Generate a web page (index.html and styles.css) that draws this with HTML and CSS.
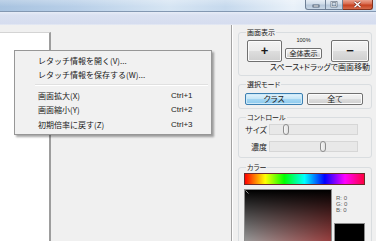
FILE: index.html
```html
<!DOCTYPE html>
<html lang="ja">
  <head>
    <meta charset="UTF-8" />
    <title>レタッチ</title>
    <link rel="stylesheet" href="styles.css">
  </head>
  <body>
    <div class="titlebar">
      <div class="caption">
        <span class="cap cap-min">
          <svg width="8" height="6" viewBox="0 0 8 6"><rect x="1" y="3" width="6" height="2" fill="#fff" stroke="#35465c" stroke-width="0.8"/></svg>
        </span>
        <span class="cap cap-max">
          <svg width="8" height="7" viewBox="0 0 8 7"><rect x="1.5" y="1" width="5" height="4.5" fill="none" stroke="#35465c" stroke-width="1.6"/><rect x="1.5" y="1" width="5" height="4.5" fill="none" stroke="#fff" stroke-width="0.7"/></svg>
        </span>
        <span class="cap cap-close">
          <svg width="9" height="7" viewBox="0 0 9 7"><path d="M1.5 0.8 L7.5 6.2 M7.5 0.8 L1.5 6.2" stroke="#7a2a1c" stroke-width="2.6"/><path d="M1.5 0.8 L7.5 6.2 M7.5 0.8 L1.5 6.2" stroke="#fff" stroke-width="1.4"/></svg>
        </span>
      </div>
    </div>
    <div class="menubar"></div>

    <div class="main">
      <div class="view">
        <div class="canvas"></div>

        <div class="menu">
          <div class="item"><span>レタッチ情報を開く(V)...</span></div>
          <div class="item"><span>レタッチ情報を保存する(W)...</span></div>
          <div class="sep"></div>
          <div class="item"><span>画面拡大(X)</span><span class="key">Ctrl+1</span></div>
          <div class="item"><span>画面縮小(Y)</span><span class="key">Ctrl+2</span></div>
          <div class="item"><span>初期倍率に戻す(Z)</span><span class="key">Ctrl+3</span></div>
        </div>
      </div>

      <div class="panel">
        <fieldset class="group g-view">
          <legend>画面表示</legend>
          <div class="zoom-row">
            <button class="btn big plus">+</button>
            <div class="zoom-mid">
              <div class="pct">100%</div>
              <button class="btn small">全体表示</button>
            </div>
            <button class="btn big minus">&minus;</button>
          </div>
          <div class="hint">スペース+ドラッグで画面移動</div>
        </fieldset>

        <fieldset class="group g-mode">
          <legend>選択モード</legend>
          <div class="mode-row">
            <button class="btn mode on">クラス</button>
            <button class="btn mode">全て</button>
          </div>
        </fieldset>

        <fieldset class="group g-ctrl">
          <legend>コントロール</legend>
          <div class="ctrl-row">
            <span class="ctrl-label">サイズ</span>
            <div class="slider"><span class="thumb" style="left: 13px"></span></div>
          </div>
          <div class="ctrl-row">
            <span class="ctrl-label">濃度</span>
            <div class="slider"><span class="thumb" style="left: 50px"></span></div>
          </div>
        </fieldset>

        <fieldset class="group g-color">
          <legend>カラー</legend>
          <div class="hue"></div>
          <div class="color-row">
            <div class="sv">
              <svg class="cursor" width="4" height="4" viewBox="0 0 4 4"><path d="M0.5 0.5 L3.5 3.5" stroke="#bbb" stroke-width="0.8"/></svg>
            </div>
            <div class="color-side">
              <div class="rgb">R: 0<br>G: 0<br>B: 0</div>
              <div class="swatch"></div>
            </div>
          </div>
        </fieldset>
      </div>
    </div>
  </body>
</html>
```

FILE: styles.css
```css
* {
  box-sizing: border-box;
}

body {
  margin: 0;
  width: 376px;
  height: 241px;
  overflow: hidden;
  background-color: #f0f0f0;
  font-family: "Noto Sans CJK JP", "Noto Sans", sans-serif;
  font-feature-settings: "palt";
  font-size: 8px;
  color: #1a1a1a;
}

/* barra de titulo */
.titlebar {
  height: 12px;
  border-bottom: 1px solid #8398b2;
  background:
    linear-gradient(rgba(255, 255, 255, 0.25), rgba(255, 255, 255, 0) 60%),
    linear-gradient(90deg, #a8c3e0 0%, #b8cfe8 20%, #d6e5f3 45%, #c6d9ed 60%, #e9f1f9 78%, #d4e3f2 88%, #c7dbef 100%);
  display: flex;
  justify-content: flex-end;
  padding-right: 3px;
}

.caption {
  display: flex;
  height: 10px;
}

.cap {
  display: flex;
  align-items: center;
  justify-content: center;
  border: 1px solid #6f8096;
  border-top: none;
  border-left: none;
  background: linear-gradient(#e6edf5, #cfdbe8 45%, #b5c6d9 55%, #c9d7e6);
}

.cap-min {
  width: 21px;
  border-left: 1px solid #6f8096;
  border-radius: 0 0 0 3px;
}

.cap-max {
  width: 17px;
}

.cap-close {
  width: 30px;
  border-color: #83331f;
  border-radius: 0 0 3px 0;
  background: linear-gradient(#eaa38f, #d9694d 45%, #c5401f 55%, #d66a4a);
}

.menubar {
  height: 13px;
  background: linear-gradient(#e7ecf7, #dae1f1 25%, #d6ddef 90%, #e8ecf5);
}

/* area principal */
.main {
  display: flex;
  height: 216px;
  overflow: hidden;
}

.view {
  position: relative;
  width: 232px;
  padding-top: 7px;
  border-right: 1px solid #a3a3a3;
}

.canvas {
  width: 51px;
  height: 100%;
  background-color: #fff;
  border-top: 1px solid #d4d4d4;
  border-right: 2px solid #9d9d9d;
}

/* menu contextual */
.menu {
  position: absolute;
  left: 14px;
  top: 25px;
  width: 198px;
  padding: 2px 0;
  background-color: #f1f1f1;
  border: 1px solid #979797;
  box-shadow: 2px 2px 2px rgba(0, 0, 0, 0.35);
  font-feature-settings: normal;
}

.item {
  display: flex;
  align-items: center;
  height: 14.5px;
  padding-left: 23px;
}

.item span:first-child {
  flex: 1;
}

.key {
  width: 40px;
  font-family: "Liberation Sans", sans-serif;
}

.sep {
  height: 6px;
  margin: 0 3px 0 20px;
  background: linear-gradient(transparent 2px, #e0e0e0 2px, #e0e0e0 3px, #fff 3px, #fff 4px, transparent 4px);
}

/* panel derecho */
.panel {
  flex: 1;
  padding: 3px 4px 0 5px;
  border-left: 1px solid #fff;
}

.group {
  margin: 0 0 4px 0;
  padding: 0 1px 3px 5px;
  border: 1px solid #d9dde0;
  border-radius: 3px;
  min-width: 0;
}

.group legend {
  padding: 0 1px;
  margin-left: 2px;
  font-size: 7px;
  line-height: 9px;
}

.g-view {
  padding-bottom: 4px;
}

.g-ctrl {
  padding-bottom: 5px;
  margin-bottom: 5px;
}

.btn {
  margin: 0;
  padding: 0;
  border: 1px solid #707070;
  border-radius: 2px;
  background: linear-gradient(#f3f3f3, #ebebeb 48%, #dddddd 52%, #cfcfcf);
  box-shadow: inset 0 0 0 1px #fbfbfb;
  font-family: inherit;
  font-feature-settings: "palt";
  color: #1a1a1a;
}

.zoom-row {
  display: flex;
  align-items: flex-start;
  padding-left: 3px;
}

.big {
  height: 22px;
  margin-top: 3px;
  font-family: "Liberation Sans", sans-serif;
  font-size: 13px;
  font-weight: bold;
  line-height: 18px;
}

.plus {
  width: 35px;
}

.minus {
  width: 38px;
  margin-left: 6px;
}

.zoom-mid {
  width: 43px;
  display: flex;
  flex-direction: column;
  align-items: center;
}

.pct {
  font-family: "Liberation Sans", sans-serif;
  font-size: 5.5px;
  line-height: 7px;
}

.small {
  width: 37px;
  height: 11px;
  margin-top: 4px;
  font-size: 7px;
  line-height: 9px;
}

.hint {
  text-align: right;
  line-height: 9px;
}

.mode-row {
  display: flex;
  gap: 4px;
  padding: 4px 0 0 1px;
}

.mode {
  width: 58px;
  height: 12px;
  font-size: 8px;
  line-height: 10px;
}

.mode + .mode {
  width: 56px;
}

.mode.on {
  border-color: #3c7fb1;
  background: linear-gradient(#e3f3fc, #c4e5f6 48%, #a4d6f2 52%, #8ccaee);
  box-shadow: inset 0 0 0 1px #cde9f8;
}

.ctrl-row {
  display: flex;
  align-items: center;
  margin-top: 2px;
  height: 11px;
}

.ctrl-row + .ctrl-row {
  margin-top: 6px;
}

.ctrl-label {
  width: 25px;
  text-align: right;
  padding-right: 2px;
  line-height: 9px;
  white-space: nowrap;
}

.slider {
  position: relative;
  width: 89px;
  height: 11px;
  border: 1px solid #d6d6d6;
  background-color: #e8e8e8;
}

.thumb {
  position: absolute;
  top: -1px;
  width: 6px;
  height: 11px;
  border: 1px solid #8c8c8c;
  border-radius: 3px;
  background: linear-gradient(90deg, #f6f6f6, #e2e2e2);
}

.hue {
  width: 121px;
  height: 12px;
  margin-top: 1px;
  border: 1px solid #6e2a2a;
  background: linear-gradient(90deg, #ff0000, #ffff00 17%, #00ff00 33%, #00ffff 50%, #0000ff 67%, #ff00ff 84%, #ff0040);
}

.color-row {
  display: flex;
  gap: 2px;
  margin-top: 4px;
}

.sv {
  position: relative;
  width: 88px;
  height: 88px;
  border: 1px solid #8c8c8c;
  background:
    linear-gradient(#000, rgba(0, 0, 0, 0)),
    linear-gradient(90deg, #fff, #ff6a6a);
}

.cursor {
  position: absolute;
  left: 0;
  top: 0;
}

.color-side {
  width: 31px;
}

.rgb {
  margin-top: 6px;
  padding-left: 2px;
  font-family: "Liberation Sans", sans-serif;
  font-size: 6px;
  line-height: 6px;
  color: #5a5a5a;
}

.swatch {
  width: 31px;
  height: 30px;
  margin-top: 10px;
  background-color: #000;
  border: 1px solid #8c8c8c;
}
```
